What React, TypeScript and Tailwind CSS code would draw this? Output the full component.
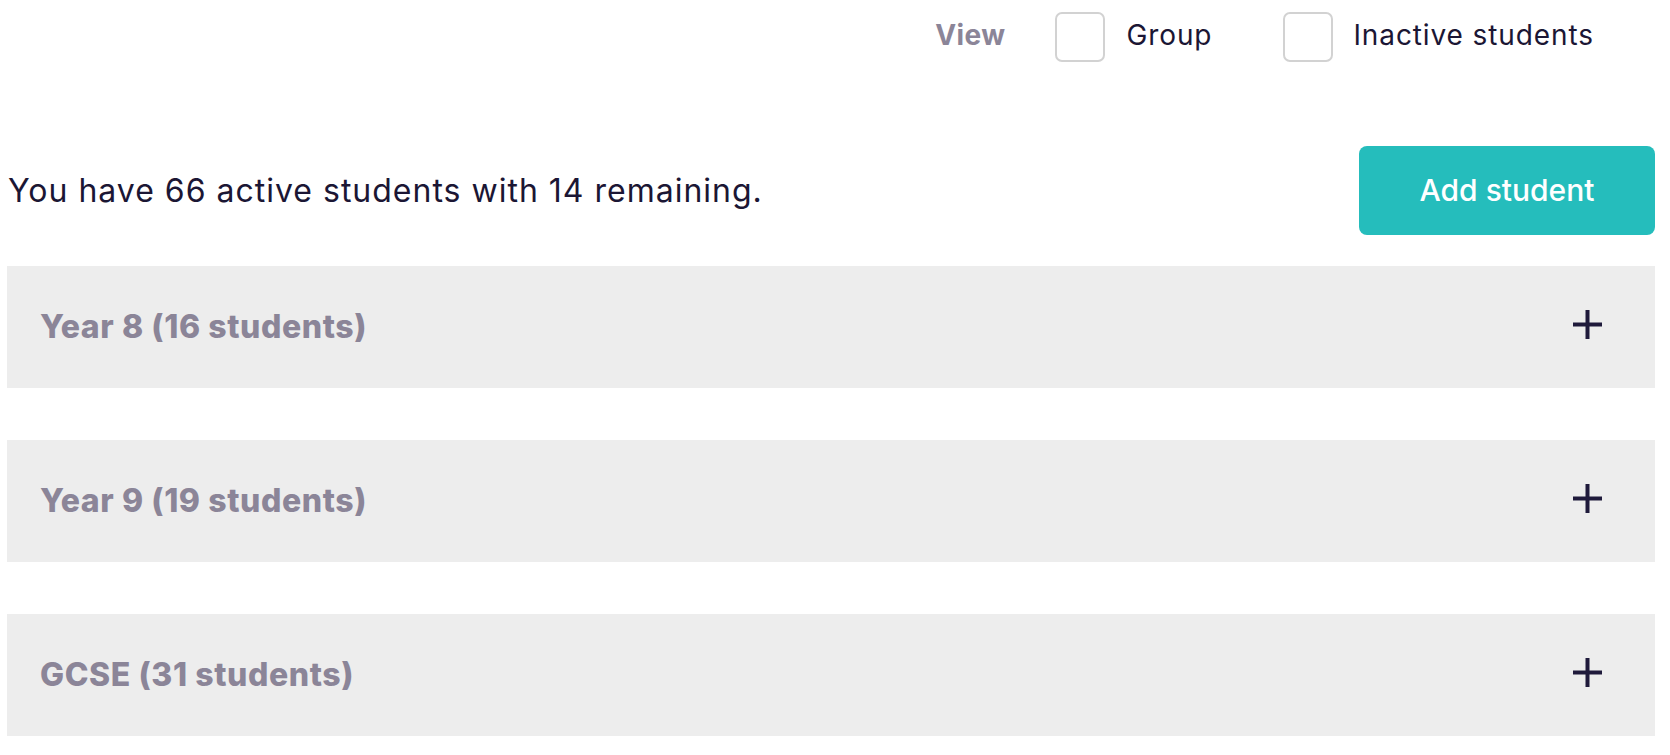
import React from "react";

function Plus() {
  return (
    <svg width="29" height="29" viewBox="0 0 29 29" className="mt-[-6px]">
      <line x1="14.5" y1="0" x2="14.5" y2="29" stroke="#1f1a3b" strokeWidth="4" />
      <line x1="0" y1="14.5" x2="29" y2="14.5" stroke="#1f1a3b" strokeWidth="4" />
    </svg>
  );
}

function Panel({ title }: { title: string }) {
  return (
    <div className="h-[122px] bg-[#ededed] flex items-center justify-between pl-[33px] pr-[53px]">
      <span className="text-[32px] font-extrabold text-[#8b8598] tracking-[0.6px]">{title}</span>
      <Plus />
    </div>
  );
}

export default function App() {
  return (
    <div className="w-[1670px] h-[755px] bg-white overflow-hidden font-['Inter',sans-serif] text-[#1b1634]">
      <div className="ml-[7px] w-[1648px]">
        <div className="flex justify-end items-center pt-[12px] pr-[61px]">
          <span className="text-[28px] font-bold text-[#8b8598] mr-[50px] tracking-[0.4px] pb-[4px]">View</span>
          <div className="w-[50px] h-[50px] rounded-[7px] border-2 border-[#d2d2d2] bg-white" />
          <span className="text-[28px] ml-[21px] tracking-[0.9px] pb-[4px]">Group</span>
          <div className="w-[50px] h-[50px] rounded-[7px] border-2 border-[#d2d2d2] bg-white ml-[71px]" />
          <span className="text-[28px] ml-[20px] tracking-[0.9px] pb-[4px]">Inactive students</span>
        </div>
        <div className="mt-[84px] flex justify-between items-center h-[89px]">
          <p className="text-[32px] tracking-[1px] pl-[1px]">You have 66 active students with 14 remaining.</p>
          <button className="w-[296px] h-[89px] rounded-[8px] bg-[#25bdbc] text-white text-[30px] font-medium">
            Add student
          </button>
        </div>
        <div className="mt-[31px] flex flex-col gap-[52px]">
          <Panel title="Year 8 (16 students)" />
          <Panel title="Year 9 (19 students)" />
          <Panel title="GCSE (31 students)" />
        </div>
      </div>
    </div>
  );
}
